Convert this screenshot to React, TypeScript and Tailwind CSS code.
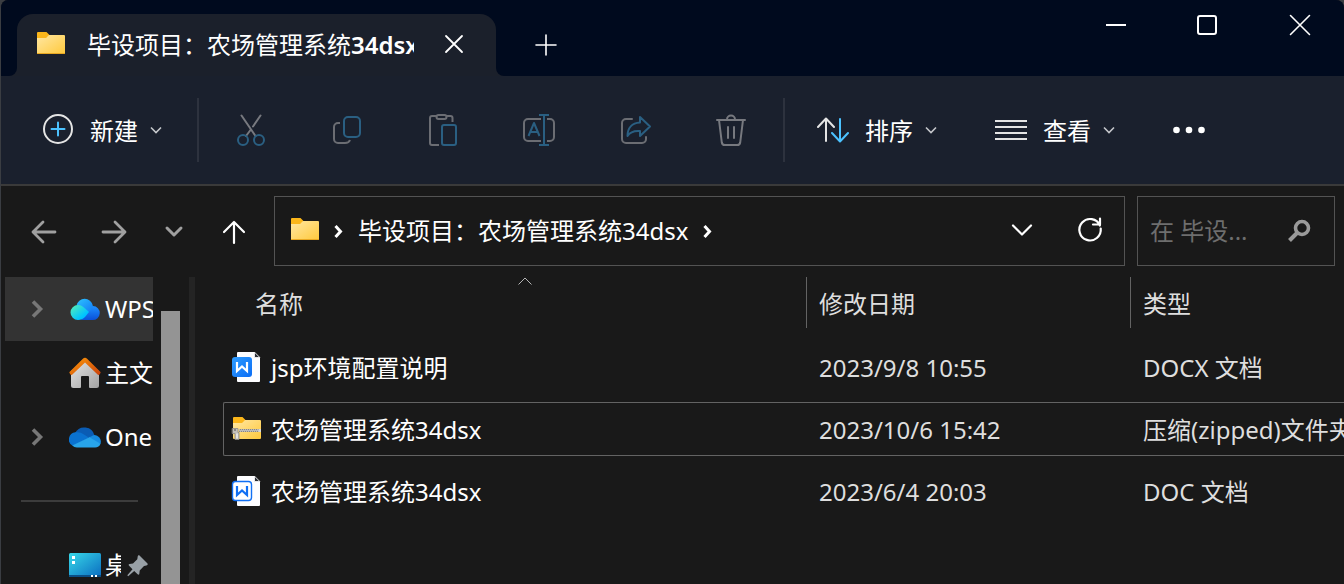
import { ReactNode } from "react";

interface IconProps {
  children: ReactNode;
  className?: string;
}

function Icon({ children, className = "" }: IconProps) {
  return (
    <svg
      viewBox="0 0 32 32"
      fill="none"
      stroke="currentColor"
      strokeWidth="2"
      strokeLinecap="round"
      strokeLinejoin="round"
      aria-hidden="true"
      className={`size-8 shrink-0 ${className}`}
    >
      {children}
    </svg>
  );
}

function ChevronDown() {
  return (
    <svg
      viewBox="0 0 12 12"
      fill="none"
      stroke="#c4c6ca"
      strokeWidth="1.6"
      aria-hidden="true"
      className="size-3 shrink-0"
    >
      <path d="M1 3.500l5 5 5-5" />
    </svg>
  );
}

function ChevronRight({ className = "" }: { className?: string }) {
  return (
    <svg
      viewBox="0 0 16 16"
      fill="none"
      stroke="currentColor"
      aria-hidden="true"
      className={`size-4 shrink-0 ${className}`}
    >
      <path d="M5.500 3l5 5.500-5 5.500" />
    </svg>
  );
}

function FolderIcon() {
  return (
    <Icon>
      <defs>
        <linearGradient id="folder" x1="0" y1="0" x2="1" y2="1">
          <stop offset="0" stopColor="#ffe7a3" />
          <stop offset="1" stopColor="#ffc93c" />
        </linearGradient>
      </defs>
      <path d="M2 4a1 1 0 0 1 1-1h8.500l3 3H29v6H2z" fill="#fbb61a" stroke="none" />
      <path
        d="M2 9h9l3-3h15a1 1 0 0 1 1 1v17a1 1 0 0 1-1 1H3a1 1 0 0 1-1-1z"
        fill="url(#folder)"
        stroke="none"
      />
      <path d="M2.500 24.500h27" stroke="#e9a822" strokeWidth="1" />
    </Icon>
  );
}

function ZipIcon() {
  return (
    <Icon>
      <path d="M2 4a1 1 0 0 1 1-1h8.500l3 3H29v6H2z" fill="#fbb61a" stroke="none" />
      <path
        d="M2 9h9l3-3h15a1 1 0 0 1 1 1v17a1 1 0 0 1-1 1H3a1 1 0 0 1-1-1z"
        fill="url(#folder)"
        stroke="none"
      />
      <path d="M8 16.500h22" stroke="#8a8782" strokeWidth="3" strokeLinecap="butt" />
      <path d="M8 16h20" stroke="#f0f0f0" strokeWidth="1" strokeDasharray="1 1" strokeLinecap="butt" />
      <path d="M8 17h20" stroke="#f0f0f0" strokeWidth="1" strokeDasharray="1 1" strokeDashoffset="1" strokeLinecap="butt" />
      <rect x="27.500" y="15" width="2.500" height="3" fill="#d5d5d5" stroke="none" />
      <path d="M1.500 14.500H7v4h1v7H4v-6H1.500z" fill="#c3c0bb" stroke="#8d8a86" strokeWidth="0.800" />
      <path d="M6 20v4" stroke="#f2f2f2" strokeWidth="1.400" />
      <circle cx="4" cy="16" r="0.900" fill="#6f6c69" stroke="none" />
    </Icon>
  );
}

function DocIcon({ filled }: { filled: boolean }) {
  return (
    <Icon>
      <defs>
        <linearGradient id="doc" x1="0" y1="0" x2="1" y2="1">
          <stop offset="0" stopColor="#2f9dff" />
          <stop offset="1" stopColor="#0a6cf5" />
        </linearGradient>
      </defs>
      <path d="M7 0h16l6 6v23a1 1 0 0 1-1 1H7a1 1 0 0 1-1-1V1a1 1 0 0 1 1-1z" fill="#fdfdff" stroke="none" />
      <path d="M23.500 .5v5h5z" fill="#2b2f36" stroke="#fdfdff" strokeWidth="0.800" />
      {filled ? (
        <rect x="1" y="5" width="20" height="20" rx="3" fill="url(#doc)" stroke="none" />
      ) : (
        <rect x="1.500" y="5.500" width="19" height="19" rx="3" fill="#fff" stroke="#1170f4" strokeWidth="1.400" />
      )}
      <path
        d="M6 10v9l5-4.500 5 4.500v-9"
        stroke={filled ? "#fff" : "#1170f4"}
        strokeWidth="2.200"
        strokeLinecap="butt"
        strokeLinejoin="miter"
      />
    </Icon>
  );
}

function WpsCloudIcon() {
  return (
    <Icon>
      <defs>
        <linearGradient id="wpsTop" x1="0" y1="0" x2="1" y2="1">
          <stop offset="0" stopColor="#2cc4ff" />
          <stop offset="1" stopColor="#1378f5" />
        </linearGradient>
        <linearGradient id="wpsLeft" x1="0" y1="0" x2="1" y2="1">
          <stop offset="0" stopColor="#5af0b4" />
          <stop offset="0.700" stopColor="#00c4ff" />
          <stop offset="1" stopColor="#00a8ff" />
        </linearGradient>
        <linearGradient id="wpsRight" x1="0" y1="0" x2="0" y2="1">
          <stop offset="0" stopColor="#1e90ff" />
          <stop offset="1" stopColor="#0a50d8" />
        </linearGradient>
      </defs>
      <g stroke="none">
        <path d="M12 27l9-13a8 8 0 0 1 3-1 7 7 0 0 1-.5 14z" fill="url(#wpsRight)" />
        <path d="M7.500 12.500a8.300 8.300 0 0 1 16.300 0c.2 2.500-1 4-3 5.500l-2 1.500z" fill="url(#wpsTop)" />
        <path d="M9 12c3 0 5 1.500 6.500 3l4.500 4-4 5c-2 2-4 3-7 3a7.500 7.500 0 0 1 0-15z" fill="url(#wpsLeft)" />
      </g>
    </Icon>
  );
}

function HomeIcon() {
  return (
    <Icon>
      <defs>
        <linearGradient id="wall" x1="0" y1="0" x2="1" y2="1">
          <stop offset="0" stopColor="#e6e6e6" />
          <stop offset="1" stopColor="#a2a2a2" />
        </linearGradient>
        <linearGradient id="roof" x1="0" y1="0" x2="1" y2="1">
          <stop offset="0" stopColor="#ff9d0a" />
          <stop offset="1" stopColor="#c9400b" />
        </linearGradient>
      </defs>
      <path
        d="M2 14L16 3l14 11v14.500a2.500 2.500 0 0 1-2.500 2.500H21a1 1 0 0 1-1-1V20a1 1 0 0 0-1-1h-6a1 1 0 0 0-1 1v10a1 1 0 0 1-1 1H4.500A2.500 2.500 0 0 1 2 28.500z"
        fill="url(#wall)"
        stroke="none"
      />
      <path
        d="M13.900 1.800a3 3 0 0 1 4.200 0L31 14.500a1.300 1.300 0 0 1 .3 1.800l-.8 1.100a1.300 1.300 0 0 1-1.900.1L16 5.500 3.400 17.500a1.300 1.300 0 0 1-1.900-.1l-.8-1.100a1.300 1.300 0 0 1 .3-1.800z"
        fill="url(#roof)"
        stroke="none"
      />
    </Icon>
  );
}

function OneDriveIcon() {
  return (
    <Icon>
      <g stroke="none">
        <path d="M6 12a10.500 10.500 0 0 1 19.500 2.500l-9 3z" fill="#0a5cb4" />
        <path d="M6.500 11.300c3.500-.6 6 .5 8 1.900l6 3.800L4 25A7.200 7.200 0 0 1 6.500 11.300z" fill="#0a72d0" />
        <path d="M19.500 16.500l5.500-2.600a6.800 6.800 0 0 1 6.500 9L26 21.500z" fill="#168be0" />
        <path d="M20.500 16.300l11 6.400A5.800 5.800 0 0 1 26 26.500H8c-2 0-3.400-.7-4.700-1.900z" fill="#28a4ea" />
      </g>
    </Icon>
  );
}

function DesktopIcon() {
  return (
    <Icon>
      <defs>
        <linearGradient id="desktop" x1="0" y1="0" x2="1" y2="1">
          <stop offset="0" stopColor="#38d8e8" />
          <stop offset="1" stopColor="#0a6cc0" />
        </linearGradient>
      </defs>
      <g stroke="none">
        <rect x="0" y="4" width="32" height="24" rx="1.500" fill="url(#desktop)" />
        <path d="M0 26h32v.5a1.500 1.500 0 0 1-1.500 1.500h-29A1.500 1.500 0 0 1 0 26.500z" fill="#0b4f86" />
        <path d="M3 7h3v3H3zM3 12h3v3H3zM22 26h2v2h-2zM26 26h2v2h-2z" fill="#fff" />
      </g>
    </Icon>
  );
}

const fileActions = [
  {
    label: "剪切",
    icon: (
      <>
        <path d="M6.500 1.500l14 20.500M25.500 1.500L18 12.500M15.500 16L11 22" stroke="#77797f" />
        <circle cx="8" cy="26" r="5" stroke="#2a5f82" />
        <circle cx="24" cy="26" r="5" stroke="#2a5f82" />
      </>
    ),
  },
  {
    label: "复制",
    icon: (
      <>
        <path d="M9 9H7a4 4 0 0 0-4 4v12a4 4 0 0 0 4 4h7c3 0 4.500-1.500 5-3" stroke="#6b6d73" strokeLinecap="butt" />
        <rect x="13" y="3" width="16" height="20" rx="4" stroke="#2a5f82" />
      </>
    ),
  },
  {
    label: "粘贴",
    icon: (
      <>
        <path d="M12 31H5a2 2 0 0 1-2-2V4a2 2 0 0 1 2-2h4M19 2h4.500a2 2 0 0 1 2 2v4" stroke="#6b6d73" strokeLinecap="butt" />
        <rect x="9.500" y="1" width="10" height="4" rx="2" stroke="#6b6d73" />
        <rect x="15" y="11" width="14" height="20" rx="2" stroke="#2a5f82" />
      </>
    ),
  },
  {
    label: "重命名",
    icon: (
      <>
        <path d="M18 5H5a4 4 0 0 0-4 4v14a4 4 0 0 0 4 4h13M24 5h3a4 4 0 0 1 4 4v14a4 4 0 0 1-4 4h-3" stroke="#6b6d73" strokeLinecap="butt" />
        <path d="M5.500 22L11 9l5.500 13M7.500 18h7M16 1h10M16 31h10M21 1v30" stroke="#2a5f82" strokeLinecap="butt" />
      </>
    ),
  },
  {
    label: "共享",
    icon: (
      <>
        <path d="M13 5H7a4 4 0 0 0-4 4v16a4 4 0 0 0 4 4h16a4 4 0 0 0 4-4v-2" stroke="#6b6d73" />
        <path d="M21 3l10 9.500L21 22v-5c-6-.5-10 1-12.500 5C8.500 14 13 9 21 8.500z" stroke="#2a5f82" />
      </>
    ),
  },
  {
    label: "删除",
    icon: (
      <path
        d="M2 6h28M12 6v-.5a4 4 0 0 1 8 0V6M4 6l2.800 22.500a3 3 0 0 0 3 2.500h12.400a3 3 0 0 0 3-2.500L28 6M13 13v11M19 13v11"
        stroke="#77797f"
      />
    ),
  },
];

const files = [
  {
    name: "jsp环境配置说明",
    date: "2023/9/8 10:55",
    type: "DOCX 文档",
    icon: <DocIcon filled />,
    selected: false,
  },
  {
    name: "农场管理系统34dsx",
    date: "2023/10/6 15:42",
    type: "压缩(zipped)文件夹",
    icon: <ZipIcon />,
    selected: true,
  },
  {
    name: "农场管理系统34dsx",
    date: "2023/6/4 20:03",
    type: "DOC 文档",
    icon: <DocIcon filled={false} />,
    selected: false,
  },
];

function TitleBar() {
  return (
    <header className="flex h-[76px] bg-[#1b202b]">
      <div className="w-4 rounded-br-lg bg-[#000a1e]" />
      <div className="bg-[#000a1e] pt-[14px]">
        <div className="flex h-full w-[479px] items-center rounded-t-2xl bg-[#1b202b] pr-[26px] pl-[18px]">
          <FolderIcon />
          <span className="mr-6 ml-5 flex-1 overflow-hidden whitespace-nowrap">
            毕设项目：农场管理系统<span className="font-semibold">34dsx</span>
          </span>
          <button aria-label="关闭标签页">
            <Icon>
              <path d="M8 7l16 16M24 7L8 23" strokeWidth="1.800" />
            </Icon>
          </button>
        </div>
      </div>
      <div className="flex flex-1 justify-between rounded-bl-lg bg-[#000a1e]">
        <button aria-label="新建标签页" className="ml-[34px] pt-[14px]">
          <Icon>
            <path d="M6 16h20M16 6v20" strokeWidth="1.600" />
          </Icon>
        </button>
        <div className="flex h-[50px]">
          <button aria-label="最小化" className="flex w-[92px] items-center justify-center pl-1">
            <Icon>
              <path d="M6 16h20" strokeLinecap="butt" />
            </Icon>
          </button>
          <button aria-label="最大化" className="flex w-[92px] items-center justify-center pl-1">
            <Icon>
              <rect x="6" y="7" width="18" height="18" rx="2" />
            </Icon>
          </button>
          <button aria-label="关闭" className="flex w-[92px] items-center justify-center pl-1">
            <Icon>
              <path d="M6.500 6.500l19 19M25.500 6.500l-19 19" strokeWidth="1.600" />
            </Icon>
          </button>
        </div>
      </div>
    </header>
  );
}

function Toolbar() {
  return (
    <div className="flex h-[110px] items-center border-b-2 border-[#3a3a3a] bg-[#1a202d] pl-[41px]">
      <button className="flex items-center gap-3">
        <Icon className="mr-1 text-[#e4e4e4]">
          <circle cx="16" cy="15" r="14" />
          <path d="M9.500 15h13M16 8.500v13" stroke="#4cc2ff" />
        </Icon>
        <span className="pt-0.5">新建</span>
        <ChevronDown />
      </button>
      <div className="ml-[35px] h-16 w-0.5 bg-[#2d323e]" />
      <div className="mx-1 flex">
        {fileActions.map((action) => (
          <button key={action.label} aria-label={action.label} disabled className="flex w-24 justify-center">
            <Icon className="overflow-visible">{action.icon}</Icon>
          </button>
        ))}
      </div>
      <div className="h-16 w-0.5 bg-[#2d323e]" />
      <div className="ml-8 flex items-center gap-[58px]">
        <button className="flex items-center gap-3">
          <Icon className="mr-1 text-[#e4e4e4]">
            <path d="M9 27V5M1 13l8-8.500L17 13" />
            <path d="M23 5v22M15 19l8 8.500 8-8.500" stroke="#4cc2ff" />
          </Icon>
          <span className="pt-0.5">排序</span>
          <ChevronDown />
        </button>
        <button className="flex items-center gap-3">
          <Icon className="mr-1 text-[#e4e4e4]">
            <path d="M0 7h32M0 13h32M0 19h32M0 25h32" strokeLinecap="butt" />
          </Icon>
          <span className="pt-0.5">查看</span>
          <ChevronDown />
        </button>
        <button aria-label="查看更多">
          <Icon className="overflow-visible">
            <g fill="#fff" stroke="none">
              <circle cx="3.500" cy="16" r="3.300" />
              <circle cx="16" cy="16" r="3.300" />
              <circle cx="28.500" cy="16" r="3.300" />
            </g>
          </Icon>
        </button>
      </div>
    </div>
  );
}

function AddressBar() {
  return (
    <div className="flex items-center pt-[10px] pr-[9px] pb-[11px] pl-[27px]">
      <button aria-label="后退" className="text-[#a0a0a0]">
        <Icon>
          <path d="M27 17H5M15 7L5 17l10 10" strokeWidth="2.800" />
        </Icon>
      </button>
      <button aria-label="前进" className="ml-[38px] text-[#a0a0a0]">
        <Icon>
          <path d="M5 17h22M17 7l10 10-10 10" strokeWidth="2.800" />
        </Icon>
      </button>
      <button aria-label="最近浏览的位置" className="ml-7 text-[#a0a0a0]">
        <Icon>
          <path d="M9 13l7 7 7-7" strokeWidth="3" />
        </Icon>
      </button>
      <button aria-label="向上" className="ml-7">
        <Icon>
          <path d="M16 28V7M6 17L16 7l10 10" strokeWidth="2.200" />
        </Icon>
      </button>
      <div className="ml-6 flex h-[70px] flex-1 items-center border border-[#535353] pr-[18px] pl-[14px]">
        <FolderIcon />
        <ChevronRight className="mr-3 ml-[9px] stroke-3" />
        <span className="whitespace-nowrap">毕设项目：农场管理系统34dsx</span>
        <ChevronRight className="ml-[11px] stroke-3" />
        <button aria-label="以前的位置" className="ml-auto">
          <Icon>
            <path d="M7 10.500l9 9 9-9" strokeWidth="2.200" />
          </Icon>
        </button>
        <button aria-label="刷新" className="ml-9">
          <Icon>
            <path d="M25.900 10.500A10.700 10.700 0 1 0 26.700 13.500M26 3.500v6h-7" strokeWidth="2.200" />
          </Icon>
        </button>
      </div>
      <label className="ml-3 flex h-[70px] w-[198px] items-center border border-[#535353] pr-5 pl-3">
        <input
          type="text"
          aria-label="搜索"
          placeholder="在 毕设..."
          className="w-0 flex-1 outline-none placeholder:text-[#6e6e6e]"
        />
        <Icon className="text-[#9a9a9a]">
          <circle cx="20" cy="13" r="6.500" strokeWidth="3.600" />
          <path d="M15 18l-7.500 7.500" strokeWidth="4" strokeLinecap="butt" />
        </Icon>
      </label>
    </div>
  );
}

interface SidebarItemProps {
  label: string;
  icon: ReactNode;
  expandable?: boolean;
  active?: boolean;
}

function SidebarItem({ label, icon, expandable, active }: SidebarItemProps) {
  return (
    <button
      className={`flex h-16 w-full shrink-0 items-center overflow-hidden pl-6 whitespace-nowrap ${
        active ? "bg-[#333333]" : ""
      }`}
    >
      <svg
        viewBox="0 0 16 20"
        fill="none"
        stroke="#777777"
        strokeWidth="3.600"
        aria-hidden="true"
        className={`mr-6 h-5 w-4 shrink-0 ${expandable ? "" : "invisible"}`}
      >
        <path d="M4 2.500l7.500 7.500L4 17.500" />
      </svg>
      {icon}
      <span className="ml-1">{label}</span>
    </button>
  );
}

function Sidebar() {
  return (
    <nav className="flex w-[194px] shrink-0 border-r-6 border-[#242424] pl-1">
      <div className="flex w-[148px] flex-col overflow-hidden">
        <SidebarItem label="WPS云盘" icon={<WpsCloudIcon />} expandable active />
        <SidebarItem label="主文件夹" icon={<HomeIcon />} />
        <SidebarItem label="OneDrive" icon={<OneDriveIcon />} expandable />
        <div className="flex h-16 shrink-0 items-center pr-[15px] pl-4">
          <hr className="w-full border-t-2 border-[#3c3c3c]" />
        </div>
        <button className="flex h-16 shrink-0 items-center pl-16 whitespace-nowrap">
          <DesktopIcon />
          <span className="mr-1 ml-1 w-4 shrink-0 overflow-hidden">桌面</span>
          <svg viewBox="0 0 24 24" fill="#98a0a6" aria-hidden="true" className="size-6 shrink-0">
            <path d="M14.500 2.500l8 8c.7 1-.2 1.800-1.200 2l-2.300.5-4.300 4.500-.4 3.500c-.2 1-1 1-1.700.3l-3.400-3.400-6 5.300-.9-.9 5.200-6.100-3.400-3.400c-.7-.7-.6-1.500.4-1.700l3.500-.6 4.300-4.300.4-2.800c.2-1 1.100-1.600 1.800-.9z" />
          </svg>
        </button>
      </div>
      <div className="mt-[34px] ml-2 w-[19px] bg-[#949494]" />
    </nav>
  );
}

function FileList() {
  return (
    <main className="flex-1 overflow-hidden pl-7">
      <table className="w-full table-fixed border-separate border-spacing-0 text-left whitespace-nowrap">
        <colgroup>
          <col className="w-[583px]" />
          <col className="w-[324px]" />
          <col />
        </colgroup>
        <thead className="text-[#dedede]">
          <tr className="h-[59px] align-top">
            <th className="p-0 font-normal">
              <div className="relative ml-5 flex h-[51px] items-center pt-0.5 pl-3">
                名称
                <svg
                  viewBox="0 0 14 8"
                  fill="none"
                  stroke="#b5b5b5"
                  aria-hidden="true"
                  className="absolute top-0 left-1/2 h-2 w-3.5 -translate-x-1/2"
                >
                  <path d="M.5 7.500L7 1l6.500 6.500" />
                </svg>
              </div>
            </th>
            <th className="p-0 font-normal">
              <div className="flex h-[51px] items-center border-l border-[#636363] pt-0.5 pl-3">修改日期</div>
            </th>
            <th className="p-0 font-normal">
              <div className="flex h-[51px] items-center border-l border-[#636363] pt-0.5 pl-3">类型</div>
            </th>
          </tr>
        </thead>
        <tbody>
          {files.map((file) => {
            const line = file.selected ? "border-[#636363]" : "border-transparent";
            return (
              <tr key={file.date} className="h-[62px]">
                <td className="p-0">
                  <div className={`flex h-[54px] items-center gap-2 rounded-l-xs border-y border-l pt-0.5 pl-[7px] ${line}`}>
                    {file.icon}
                    {file.name}
                  </div>
                </td>
                <td className="p-0 text-[#dedede]">
                  <div className={`flex h-[54px] items-center border-y pt-0.5 pl-[13px] ${line}`}>{file.date}</div>
                </td>
                <td className="p-0 text-[#dedede]">
                  <div className={`flex h-[54px] items-center overflow-hidden border-y pt-0.5 pl-[13px] ${line}`}>
                    {file.type}
                  </div>
                </td>
              </tr>
            );
          })}
        </tbody>
      </table>
    </main>
  );
}

export default function App() {
  return (
    <div className="h-screen bg-[#3a3d42] font-['Noto_Sans','Noto_Sans_CJK_SC',sans-serif] text-2xl leading-8 text-white">
      <div className="flex h-full flex-col overflow-hidden rounded-t-lg border-l border-[#3a3d42] bg-[#191919]">
        <TitleBar />
        <Toolbar />
        <AddressBar />
        <div className="flex min-h-0 flex-1">
          <Sidebar />
          <FileList />
        </div>
      </div>
    </div>
  );
}
